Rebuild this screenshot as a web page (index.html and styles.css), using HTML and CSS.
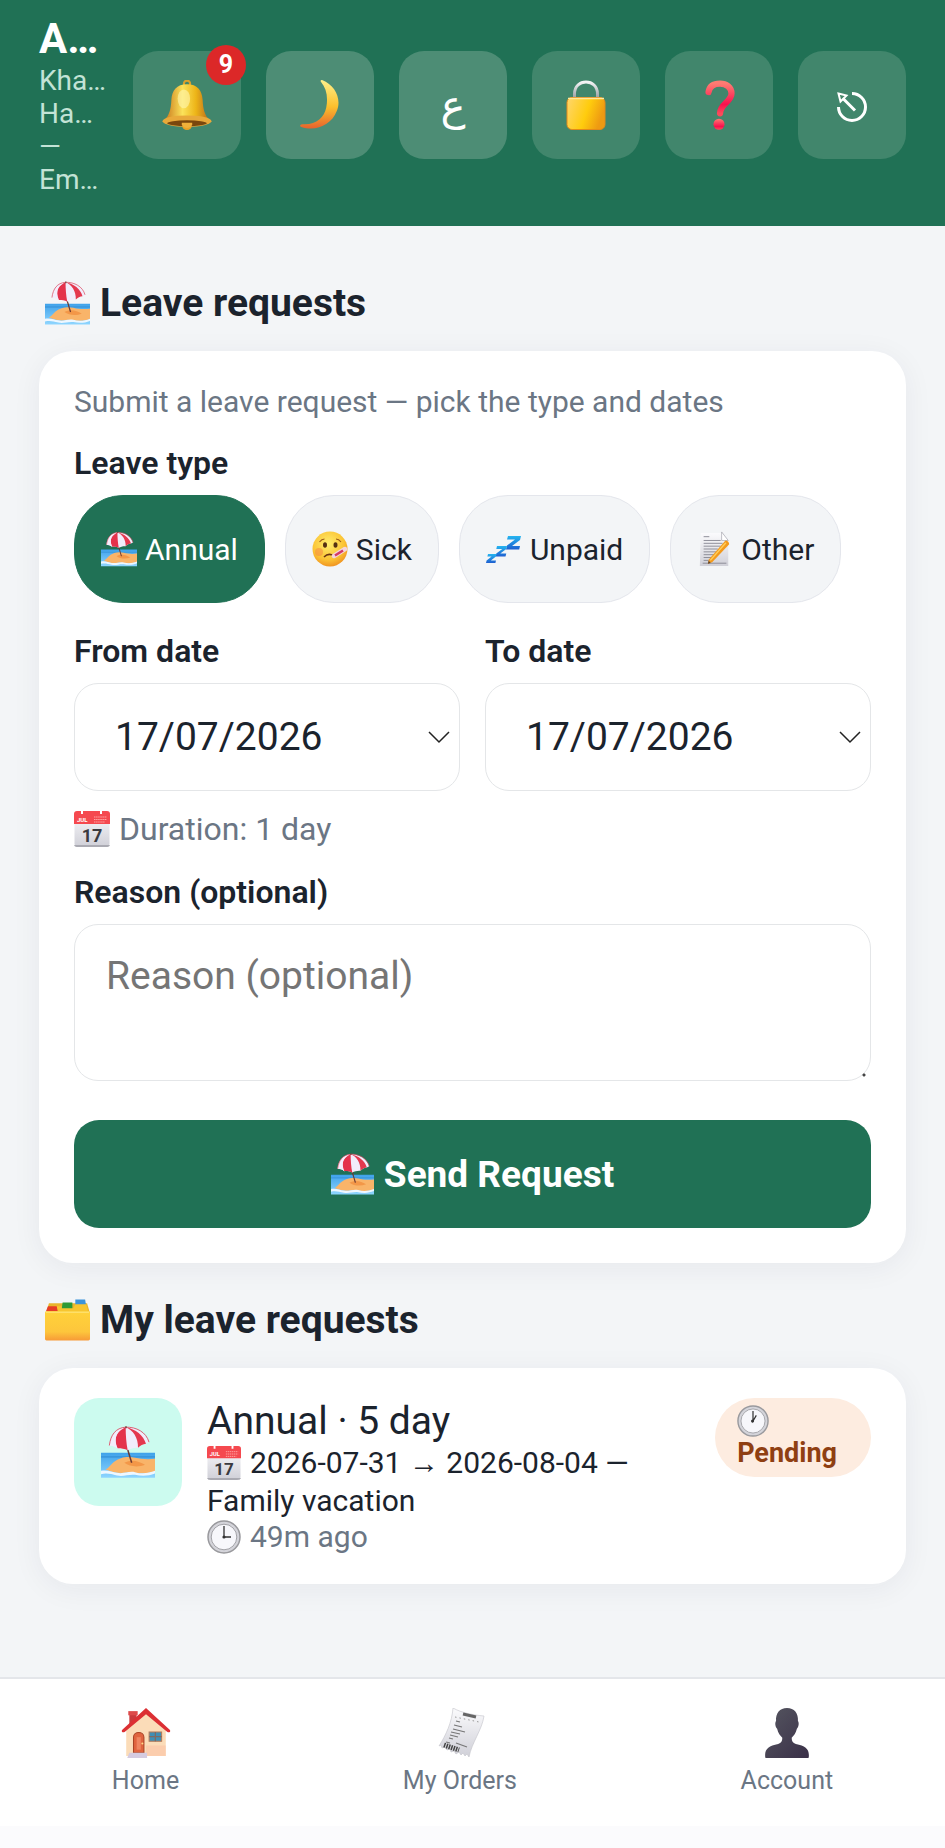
FILE: index.html
```html
<!DOCTYPE html>
<html lang="en">

<head>
    <meta charset="UTF-8">
    <meta name="viewport" content="width=device-width, initial-scale=1.0">
    <title>Leave requests</title>
    <link rel="stylesheet" href="styles.css">
</head>

<body>
    <!-- shared icons -->
    <svg class="sprite" aria-hidden="true">
        <defs>
            <linearGradient id="gGold" x1="0" x2="1" y1="0" y2="0">
                <stop offset="0" stop-color="#c9781c"/>
                <stop offset=".4" stop-color="#fbe25a"/>
                <stop offset=".7" stop-color="#edb417"/>
                <stop offset="1" stop-color="#b96a1c"/>
            </linearGradient>
            <linearGradient id="gMoon" x1="0" x2="0" y1="0" y2="1">
                <stop offset="0" stop-color="#fff08a"/>
                <stop offset=".55" stop-color="#fbc02d"/>
                <stop offset="1" stop-color="#e8622c"/>
            </linearGradient>
            <linearGradient id="gLock" x1="0" x2="1" y1="0" y2=".3">
                <stop offset="0" stop-color="#ffd66e"/>
                <stop offset=".6" stop-color="#ffcc0d"/>
                <stop offset="1" stop-color="#ee9a12"/>
            </linearGradient>
            <linearGradient id="gShackle" x1="0" x2="0" y1="0" y2="1">
                <stop offset="0" stop-color="#f4f4f6"/>
                <stop offset="1" stop-color="#8d9297"/>
            </linearGradient>
            <linearGradient id="gRed" x1="0" x2="0" y1="0" y2="1">
                <stop offset="0" stop-color="#ff7b72"/>
                <stop offset=".7" stop-color="#f8104e"/>
                <stop offset="1" stop-color="#fa4a5a"/>
            </linearGradient>
            <linearGradient id="gSea" x1="0" x2="0" y1="0" y2="1">
                <stop offset="0" stop-color="#3fa2ea"/>
                <stop offset="1" stop-color="#8fd6ff"/>
            </linearGradient>
            <linearGradient id="gFolder" x1="0" x2="0" y1="0" y2="1">
                <stop offset="0" stop-color="#ffd23a"/>
                <stop offset=".7" stop-color="#fdc63c"/>
                <stop offset="1" stop-color="#f79a37"/>
            </linearGradient>
            <radialGradient id="gFace" cx=".45" cy=".35" r=".7">
                <stop offset="0" stop-color="#ffee6e"/>
                <stop offset=".65" stop-color="#fbc334"/>
                <stop offset="1" stop-color="#ee8a1d"/>
            </radialGradient>
            <linearGradient id="gZ" x1="0" x2="0" y1="0" y2="1">
                <stop offset="0" stop-color="#25b5f0"/>
                <stop offset="1" stop-color="#1e5fd0"/>
            </linearGradient>
            <linearGradient id="gPaper" x1="0" x2="0" y1="0" y2="1">
                <stop offset="0" stop-color="#fbfbfd"/>
                <stop offset="1" stop-color="#d0d0d8"/>
            </linearGradient>
            <linearGradient id="gUser" x1="0" x2="1" y1="0" y2="1">
                <stop offset="0" stop-color="#555660"/>
                <stop offset="1" stop-color="#3a3048"/>
            </linearGradient>
        </defs>

        <symbol id="bell" viewBox="0 0 48 48">
            <circle cx="24" cy="3.600" r="3" fill="none" stroke="#dba02b" stroke-width="2"/>
            <circle cx="24" cy="43" r="5" fill="#e9a325"/>
            <path d="M24 4C14 4 9.500 10 9 19c-.5 10-2 14-6.500 20h43c-4.500-6-6-10-6.500-20C38.500 10 34 4 24 4z" fill="url(#gGold)"/>
            <ellipse cx="24" cy="39.500" rx="23.500" ry="5.500" fill="#e8a93a"/>
            <ellipse cx="24" cy="41.500" rx="19" ry="2.800" fill="#7a470d"/>
            <path d="M19 41h10v2c-1 4-9 4-10 0z" fill="#f0b13a"/>
            <ellipse cx="21" cy="18" rx="6" ry="9" fill="#fff6b0" opacity=".6"/>
        </symbol>

        <symbol id="moon" viewBox="0 0 48 48">
            <path d="M26 0c13 5 19 19 14 30C35 43 20 50 6 45c-2-.5-1-2.500 1-2.500 13 1 21-6 23-16C32 16 30 8 25 2c-1-1.500 0-2 1-2z" fill="url(#gMoon)"/>
        </symbol>

        <symbol id="lock" viewBox="0 0 48 50">
            <path d="M12.500 20V14C12.500 6 18 2 24 2s11.500 4 11.500 12v6" fill="none" stroke="url(#gShackle)" stroke-width="3"/>
            <rect x="5" y="17.500" width="38" height="32" rx="5" fill="url(#gLock)" stroke="#e48a18" stroke-width="1"/>
            <path d="M6 18.500h36" stroke="#ffe99a" stroke-width="1.500"/>
        </symbol>

        <symbol id="question" viewBox="0 0 48 48">
            <path d="M14 11.500C15 5 20 3.500 25 3.500c6 0 11 3.500 11 9.500 0 8-11 10-11 19" fill="none" stroke="url(#gRed)" stroke-width="6" stroke-linecap="round"/>
            <circle cx="24" cy="42.500" r="5.300" fill="url(#gRed)"/>
        </symbol>

        <symbol id="escape" viewBox="0 0 30 30">
            <path d="M1.500 15A13.500 13.500 0 1 0 15 1.500" fill="none" stroke="#fff" stroke-width="3"/>
            <path d="M18 18.500L5 5.500" stroke="#fff" stroke-width="3"/>
            <path d="M1.500 1.500l8 2-6 6z" fill="#438668" stroke="#fff" stroke-width="2"/>
        </symbol>

        <symbol id="beach" viewBox="0 0 162 155">
            <path d="M0 80h162v75H0z" fill="url(#gSea)"/>
            <path d="M0 92h162" stroke="#2b86cf" stroke-width="5" opacity=".5"/>
            <path d="M14 130c14-8 18-24 46-34 24-8 44 0 60 2 14 2 28 2 42 0v38c-30 8-60 6-80 2-24 6-50 0-68-8z" fill="#f9b469"/>
            <path d="M70 110c20-12 44-6 62 6-20 8-46 6-62-6z" fill="#f08d3d" opacity=".75"/>
            <path d="M0 134c20-4 34 4 48 6 22 4 34-6 54-2 20 6 40 4 60-4v8c-20 8-40 8-60 4-20-2-34 6-54 2-18-4-30-8-48-4z" fill="#eef7ff"/>
            <path d="M77 60l15 50" stroke="#6b3a33" stroke-width="4.500"/>
            <path d="M74 3C48 4 27 26 25 58c8 0 18 3 25 9 8-1 20 0 30 5 9-5 20-8 31-7 7-7 15-11 24-12l9-5C136 20 104 1 74 3z" fill="#f1ecfb"/>
            <path d="M74 3C56 12 32 30 50 67c-2-1 18-1 30 5-4-20-6-46-6-69z" fill="#e4324c"/>
            <path d="M74 3C50 8 36 34 50 67c-7-6-17-9-25-9C28 28 44 8 74 3z" fill="#f3eefc"/>
            <path d="M74 3c22 8 38 32 37 62 7-7 15-11 24-12C128 28 104 8 74 3z" fill="#e4384e"/>
            <path d="M74 3C44 5 29 26 25 58M74 3c32-1 62 15 70 45" fill="none" stroke="#d9455a" stroke-width="2.500"/>
            <path d="M75 0v6" stroke="#6b3a33" stroke-width="4"/>
        </symbol>

        <symbol id="sick" viewBox="0 0 36 36">
            <circle cx="18" cy="18" r="17.500" fill="url(#gFace)"/>
            <ellipse cx="13" cy="14" rx="2" ry="2.800" fill="#553012"/>
            <ellipse cx="23.500" cy="14" rx="2" ry="2.800" fill="#553012"/>
            <path d="M7.500 11c1.500-2 3-3 5-3M24 8c2 0 3.500 1 5 3" fill="none" stroke="#9b5a16" stroke-width="1.200"/>
            <circle cx="7" cy="21" r="4" fill="#f58442" opacity=".5"/>
            <path d="M12 26c3-3 7-3 10-1" fill="none" stroke="#6b3512" stroke-width="1.600"/>
            <path d="M22 25l11-7" stroke="#f4d5dc" stroke-width="4.500" stroke-linecap="round"/>
            <path d="M23 24.500l8-5" stroke="#d33a67" stroke-width="2.500"/>
        </symbol>

        <symbol id="zzz" viewBox="0 0 36 36">
            <path d="M22 5h13l-1 4-8 6h8l-.8 3.500H20l1-4 8-6h-8z" fill="url(#gZ)"/>
            <path d="M11 15h10l-.7 3-6 4.500h6l-.8 3H9.500l.8-3 6-4.500h-6z" fill="url(#gZ)"/>
            <path d="M2 23h8.500l-.6 2.500-5 4H10l-.6 2.500H0l.6-2.500 5-4H1.400z" fill="url(#gZ)"/>
        </symbol>

        <symbol id="memo" viewBox="0 0 36 38">
            <path d="M3 2h22l7 8v27H2z" fill="url(#gPaper)"/>
            <path d="M25 1v9h7z" fill="#fff" stroke="#a9a9b2" stroke-width=".8"/>
            <path d="M6 6h6M6 10h18M6 13h20M6 16h18M6 19h15M6 22h13M6 25h11M6 28h8M6 31h8M5 34h25" stroke="#8b8b95" stroke-width="1"/>
            <path d="M29 10L11.500 30l-1 4.500 4.500-1.500L33 14c0-2-1.500-4-4-4z" fill="#f39a1d"/>
            <path d="M29.500 12.500L13 31" stroke="#ffcf5b" stroke-width="1.500"/>
            <path d="M11.300 31.500l-.8 3 3-.8z" fill="#5d4432"/>
        </symbol>

        <symbol id="calendar" viewBox="0 0 36 36">
            <rect x=".5" y=".5" width="35" height="35" rx="3" fill="url(#gPaper)"/>
            <path d="M0 13V3c0-2 1-3 3-3h30c2 0 3 1 3 3v10z" fill="#f5494f"/>
            <path d="M7 0h2v3H7zM26 0h2v3h-2z" fill="#fff"/>
            <path d="M20 6h13M20 8.500h13M20 11h11" stroke="#ffa5a2" stroke-width="1" stroke-dasharray="1.500 .6"/>
            <path d="M0 34c1 2 2 2 4 2h28c2 0 3 0 4-2z" fill="#aaaab2"/>
        </symbol>

        <symbol id="folder" viewBox="0 0 46 42">
            <path d="M4 4h39l3 10H1z" fill="#e9b52c"/>
            <path d="M3 7h9l2 5H1z" fill="#e63d26"/>
            <path d="M18 3h10v7H17z" fill="#2e9a35"/>
            <path d="M31 0h10l1 6H31z" fill="#3c93d9"/>
            <path d="M12 7h5v2h12l2-4h11l2 7H13z" fill="#f7c52f"/>
            <rect y="12" width="46" height="30" rx="1.500" fill="url(#gFolder)"/>
            <path d="M1 13h44" stroke="#ffe783" stroke-width="1"/>
        </symbol>

        <symbol id="clockFace" viewBox="0 0 34 34">
            <circle cx="17" cy="17" r="16" fill="#d4d4da" stroke="#99999d" stroke-width="1.500"/>
            <circle cx="17" cy="17" r="12.800" fill="#f7f7fb" stroke="#a3a3a8" stroke-width="1"/>
        </symbol>

        <symbol id="clock3" viewBox="0 0 34 34">
            <use href="#clockFace"/>
            <path d="M17 6v11h7" fill="none" stroke="#333" stroke-width="1.300"/>
            <circle cx="17" cy="17" r="1.600" fill="#333"/>
        </symbol>

        <symbol id="clock1" viewBox="0 0 34 34">
            <use href="#clockFace"/>
            <path d="M17 6.500V17l3.500-6" fill="none" stroke="#333" stroke-width="1.300"/>
            <circle cx="16.500" cy="17" r="1.600" fill="#333"/>
        </symbol>

        <symbol id="home" viewBox="0 0 48 48">
            <path d="M8 5h7v14H8z" fill="#c93a3d"/>
            <path d="M7 3h9v4H7z" fill="#dd4a4a"/>
            <path d="M5 21L24 4l19 17v25H5z" fill="#fbdcb8"/>
            <path d="M24 36h19v10H24z" fill="#fcc3a5" opacity=".6"/>
            <path d="M24 0L1 21c-1 2 1 3 2.500 2L24 6l20.500 17c1.500 1 3.500 0 2.500-2z" fill="#dc2f33"/>
            <path d="M12 43V28c0-6 10-6 10 0v15z" fill="#e0643f" stroke="#a94326" stroke-width="1"/>
            <path d="M15 40V28h4v12z" fill="#ef8560"/>
            <circle cx="20.500" cy="34" r="1" fill="#ffd98a"/>
            <path d="M27 23h12v9H27z" fill="#3f8fb5" stroke="#b67b58" stroke-width="1"/>
            <path d="M33 23v9M27 27.500h12" stroke="#7e6a62" stroke-width="1.200"/>
            <path d="M8 43h17v5H6z" fill="#d5cbe0"/>
        </symbol>

        <symbol id="receipt" viewBox="0 0 48 50">
            <path d="M17 0c9 5 20 7 31 8-2 14-12 26-15 41l-2-3-2 2-2-3-2 2-2-3-3 2-2-3-3 1-1-3-3 1-2-3-3 1-1-3-2 1C10 27 16 14 17 0z" fill="url(#gPaper)" stroke="#c3c3ca" stroke-width=".6"/>
            <path d="M27 6l13 3" stroke="#666" stroke-width="3"/>
            <path d="M19 9l24 5" stroke="#999" stroke-width="1" stroke-dasharray="1.500 3"/>
            <path d="M20 13l4 1M18 17l8 2M17 21l12 3M15 24l9 2M14 27l8 2M13 30l4 1M10 34l4 1M20 35l11 4" stroke="#777" stroke-width="1.200"/>
            <path d="M8 37l15 5" stroke="#444" stroke-width="5" stroke-dasharray="1.500 1"/>
        </symbol>

        <symbol id="user" viewBox="0 0 48 48">
            <path d="M24 0c-7 0-11 5-10.500 12.500-1.500 2-.5 6 1 7.500 1 4.500 3 6.500 5 8.500 0 3-1 5-4 6C7 36 3 39 3 45c0 2 0 3 1 3h40c1 0 1-1 1-3 0-6-4-9-12.500-10.500-3-1-4-3-4-6 2-2 4-4 5-8.500 1.500-1.500 2.500-5.500 1-7.500C35 5 31 0 24 0z" fill="url(#gUser)"/>
        </symbol>
    </svg>

    <header class="topbar">
        <div class="brand">
            <h1>A…</h1>
            <p>Kha…</p>
            <p>Ha…</p>
            <p>—</p>
            <p>Em…</p>
        </div>
        <button class="icon-btn" type="button" aria-label="Notifications">
            <svg class="icon-lg"><use href="#bell"/></svg>
            <span class="count">9</span>
        </button>
        <button class="icon-btn light" type="button" aria-label="Dark mode">
            <svg class="icon-lg"><use href="#moon"/></svg>
        </button>
        <button class="icon-btn light lang" type="button" lang="ar">ع</button>
        <button class="icon-btn" type="button" aria-label="Change password">
            <svg class="icon-lg"><use href="#lock"/></svg>
        </button>
        <button class="icon-btn" type="button" aria-label="Help">
            <svg class="icon-lg"><use href="#question"/></svg>
        </button>
        <button class="icon-btn logout" type="button" aria-label="Log out">
            <svg class="icon-sm"><use href="#escape"/></svg>
        </button>
    </header>

    <main class="content">
        <h2 class="section-title"><svg class="icon-title"><use href="#beach"/></svg>Leave requests</h2>

        <form class="card leave-form">
            <p class="hint">Submit a leave request — pick the type and dates</p>

            <h3 class="label">Leave type</h3>
            <div class="chips">
                <button class="chip active" type="button"><svg class="icon"><use href="#beach"/></svg>Annual</button>
                <button class="chip" type="button"><svg class="icon"><use href="#sick"/></svg>Sick</button>
                <button class="chip" type="button"><svg class="icon"><use href="#zzz"/></svg>Unpaid</button>
                <button class="chip" type="button"><svg class="icon"><use href="#memo"/></svg>Other</button>
            </div>

            <div class="dates">
                <div class="field">
                    <label class="label" for="fromDate">From date</label>
                    <input class="date" id="fromDate" type="text" value="17/07/2026">
                </div>
                <div class="field">
                    <label class="label" for="toDate">To date</label>
                    <input class="date" id="toDate" type="text" value="17/07/2026">
                </div>
            </div>

            <p class="duration">
                <svg class="icon" viewBox="0 0 36 36">
                    <use href="#calendar"/>
                    <text x="3" y="10.500" class="cal-month">JUL</text>
                    <text x="18" y="31" text-anchor="middle" class="cal-day">17</text>
                </svg>
                Duration: 1 day
            </p>

            <label class="label" for="reason">Reason (optional)</label>
            <textarea class="reason" id="reason" placeholder="Reason (optional)"></textarea>

            <button class="send" type="submit"><svg class="icon-send"><use href="#beach"/></svg>Send Request</button>
        </form>

        <h2 class="section-title"><svg class="icon-title"><use href="#folder"/></svg>My leave requests</h2>

        <article class="card request">
            <div class="tile"><svg class="icon-tile"><use href="#beach"/></svg></div>
            <div class="request-info">
                <h3>Annual · 5 day</h3>
                <p class="range">
                    <svg class="icon-text" viewBox="0 0 36 36">
                        <use href="#calendar"/>
                        <text x="3" y="10.500" class="cal-month">JUL</text>
                        <text x="18" y="31" text-anchor="middle" class="cal-day">17</text>
                    </svg>2026-07-31 → 2026-08-04 — Family vacation
                </p>
                <p class="ago"><svg class="icon-text"><use href="#clock3"/></svg>49m ago</p>
            </div>
            <span class="status"><svg class="icon-status"><use href="#clock1"/></svg>Pending</span>
        </article>
    </main>

    <nav class="tabs">
        <a href="#home"><svg class="icon-lg"><use href="#home"/></svg>Home</a>
        <a href="#orders"><svg class="icon-lg"><use href="#receipt"/></svg>My Orders</a>
        <a href="#account"><svg class="icon-lg"><use href="#user"/></svg>Account</a>
    </nav>
</body>

</html>
```
FILE: styles.css
```css
* {
  margin: 0;
  padding: 0;
  box-sizing: border-box;
}
body {
  min-height: 100vh;
  display: flex;
  flex-direction: column;
  padding-bottom: 22px;
  font-family: Roboto, "Liberation Sans", sans-serif;
  font-size: 30px;
  color: #1b232d;
  background-color: #fbfbfd;
}
button,
input,
textarea {
  font-family: inherit;
  color: inherit;
}
button {
  border: none;
  cursor: pointer;
}
svg {
  flex-shrink: 0;
}

.sprite {
  position: absolute;
  width: 0;
  height: 0;
}
.cal-month {
  font-size: 6px;
  font-weight: 700;
  fill: white;
}
.cal-day {
  font-size: 18px;
  font-weight: 700;
  fill: #3a3a3f;
}

/* icon sizes */
.icon {
  width: 36px;
  height: 36px;
}
.icon-sm {
  width: 30px;
  height: 30px;
}
.icon-lg {
  width: 50px;
  height: 50px;
}
.icon-title {
  width: 45px;
  height: 44px;
}
.icon-send {
  width: 43px;
  height: 42px;
}
.icon-tile {
  width: 54px;
  height: 52px;
}
.icon-text {
  width: 34px;
  height: 34px;
  margin-right: 9px;
  vertical-align: -7px;
}
.icon-status {
  display: block;
  width: 32px;
  height: 32px;
}

/* header */
.topbar {
  display: flex;
  align-items: center;
  gap: 25px;
  padding: 14px 39px 30px;
  color: white;
  background-color: #207155;
}
.brand {
  flex: 1;
  min-width: 0;
  white-space: nowrap;
}
.brand h1 {
  font-size: 42px;
  font-weight: 700;
  line-height: 50px;
}
.brand p {
  font-size: 28px;
  line-height: 33px;
  color: #c3e3d6;
}
.icon-btn {
  position: relative;
  display: flex;
  align-items: center;
  justify-content: center;
  flex-shrink: 0;
  width: 108px;
  height: 108px;
  border-radius: 25px;
  color: white;
  background-color: #41866c;
}
.icon-btn.light {
  background-color: #4d8d75;
}
.icon-btn.lang {
  font-family: "DejaVu Sans", sans-serif;
  font-size: 42px;
}
.icon-btn.logout {
  padding-top: 4px;
}
.count {
  position: absolute;
  top: -6px;
  right: -5px;
  width: 40px;
  height: 40px;
  border-radius: 50%;
  font-size: 25px;
  font-weight: 700;
  line-height: 40px;
  text-align: center;
  background-color: #dc2828;
}

/* page */
.content {
  flex: 1;
  padding: 54px 39px 34px;
  background-color: #f3f5f7;
}
.section-title {
  display: flex;
  align-items: center;
  gap: 10px;
  height: 46px;
  margin-bottom: 25px;
  padding-left: 6px;
  font-size: 39px;
  font-weight: 700;
}
.card {
  border-radius: 34px;
  background-color: white;
  box-shadow: 0 5px 30px rgba(27, 35, 60, 0.06);
}

/* leave form */
.leave-form {
  margin-bottom: 34px;
  padding: 34px 35px 35px;
}
.hint {
  margin-bottom: 26px;
  font-size: 30px;
  line-height: 34px;
  color: #6b7684;
}
.label {
  display: block;
  margin-bottom: 14px;
  font-size: 32px;
  font-weight: 600;
  line-height: 36px;
}
.chips {
  display: flex;
  flex-wrap: wrap;
  gap: 20px;
  margin-bottom: 30px;
}
.chip {
  display: flex;
  align-items: center;
  gap: 8px;
  height: 108px;
  padding: 0 26px;
  border: 1px solid #e4e6ec;
  border-radius: 49px;
  font-size: 30px;
  background-color: #f3f5f7;
}
.chip.active {
  border-color: #207155;
  color: white;
  background-color: #207155;
}
.dates {
  display: grid;
  grid-template-columns: 1fr 1fr;
  gap: 25px;
  margin-bottom: 20px;
}
.date,
.reason {
  display: block;
  width: 100%;
  border: 1px solid #e4e6e8;
  border-radius: 24px;
  font-size: 39px;
  background-color: white;
}
.date {
  height: 108px;
  padding: 0 60px 0 40px;
  background-image: url("data:image/svg+xml,%3Csvg xmlns='http://www.w3.org/2000/svg' width='22' height='13'%3E%3Cpath d='M1 1l10 10L21 1' fill='none' stroke='%23222' stroke-width='1.500'/%3E%3C/svg%3E");
  background-repeat: no-repeat;
  background-position: right 9px center;
}
.duration {
  display: flex;
  align-items: center;
  gap: 9px;
  margin-bottom: 27px;
  font-size: 32px;
  line-height: 36px;
  color: #6b7684;
}
.reason {
  height: 157px;
  margin-bottom: 39px;
  padding: 28px 31px;
  line-height: 46px;
}
.reason::placeholder {
  color: #757575;
}
.reason::-webkit-resizer {
  background: radial-gradient(circle at 9px 10px, #444 1px, transparent 2px);
}
.send {
  display: flex;
  align-items: center;
  justify-content: center;
  gap: 10px;
  width: 100%;
  height: 108px;
  border-radius: 25px;
  font-size: 37px;
  font-weight: 700;
  color: white;
  background-color: #207155;
}

/* request list */
.request {
  display: flex;
  align-items: flex-start;
  gap: 25px;
  padding: 30px 35px 30px;
}
.tile {
  display: flex;
  align-items: center;
  justify-content: center;
  width: 108px;
  height: 108px;
  border-radius: 25px;
  background-color: #ccfbef;
}
.request-info {
  flex: 1;
  min-width: 0;
}
.request-info h3 {
  font-size: 39px;
  font-weight: 400;
  line-height: 46px;
}
.range {
  font-size: 30px;
  line-height: 38px;
}
.ago {
  font-size: 30px;
  line-height: 34px;
  color: #6b7684;
}
.status {
  padding: 7px 34px 8px 22px;
  border-radius: 40px;
  font-size: 27px;
  font-weight: 700;
  line-height: 32px;
  color: #8f3f12;
  background-color: #fdece0;
}

/* bottom tabs */
.tabs {
  display: flex;
  justify-content: space-around;
  padding: 29px 0 30px;
  border-top: 2px solid #e4e6ea;
  background-color: white;
}
.tabs a {
  display: flex;
  flex-direction: column;
  align-items: center;
  gap: 8px;
  font-size: 25px;
  line-height: 30px;
  text-decoration: none;
  color: #6b7684;
}
```
